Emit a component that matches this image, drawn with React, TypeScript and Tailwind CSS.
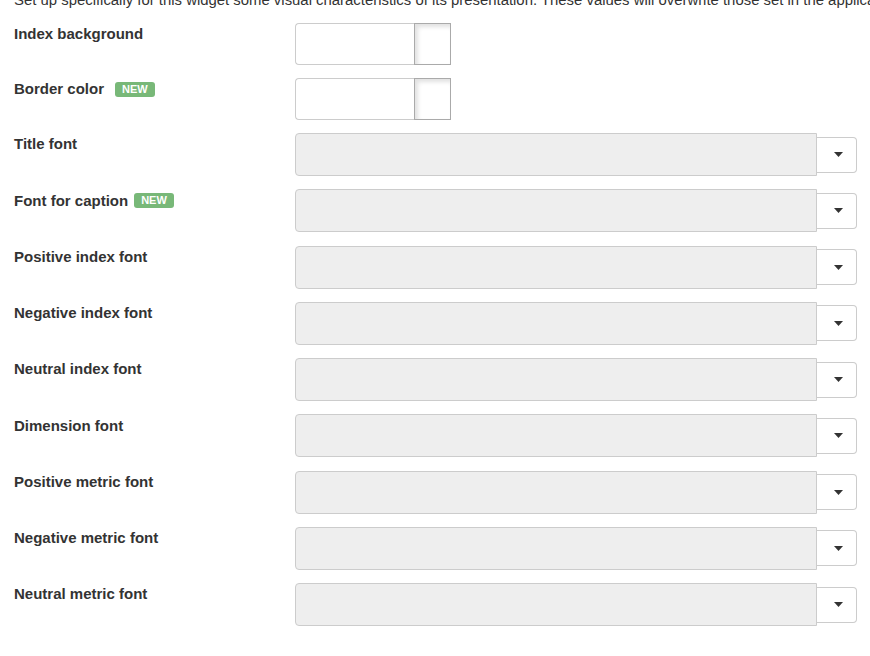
import React from 'react';

type Field = { label: string; isNew: boolean; badgeGap?: string };

const colorFields: Field[] = [
  { label: 'Index background', isNew: false },
  { label: 'Border color', isNew: true, badgeGap: 'ml-[11px]' },
];

const fontFields: Field[] = [
  { label: 'Title font', isNew: false },
  { label: 'Font for caption', isNew: true, badgeGap: 'ml-[6px]' },
  { label: 'Positive index font', isNew: false },
  { label: 'Negative index font', isNew: false },
  { label: 'Neutral index font', isNew: false },
  { label: 'Dimension font', isNew: false },
  { label: 'Positive metric font', isNew: false },
  { label: 'Negative metric font', isNew: false },
  { label: 'Neutral metric font', isNew: false },
];

const NewBadge = ({ gap }: { gap?: string }) => (
  <span
    className={`${gap ?? 'ml-[8px]'} inline-flex h-[15px] items-center rounded-[3px] bg-[#78b878] px-[7px] text-[11px] font-bold leading-none text-white`}
  >
    NEW
  </span>
);

const FieldLabel = ({ label, isNew, badgeGap }: Field) => (
  <div className="flex h-[22px] w-[281px] shrink-0 items-center pt-px text-[15px] font-bold text-[#333]">
    <span>{label}</span>
    {isNew && <NewBadge gap={badgeGap} />}
  </div>
);

const ColorField = (props: Field) => (
  <div className="flex h-[55px] items-start">
    <FieldLabel {...props} />
    <div className="flex h-[42px]">
      <input
        type="text"
        className="h-full w-[119px] rounded-l-[4px] border border-r-0 border-[#ccc] bg-white outline-none"
      />
      <div className="h-full w-[37px] border border-[#aaa] bg-white shadow-[inset_3px_3px_4px_rgba(0,0,0,0.12)]" />
    </div>
  </div>
);

const FontSelect = (props: Field) => (
  <div className="flex h-[56.25px] items-start">
    <FieldLabel {...props} />
    <div className="flex h-[43px] items-center">
      <div className="h-full w-[522px] rounded-l-[4px] border border-[#ccc] bg-[#eee]" />
      <button className="flex h-[36px] w-[40px] items-center justify-center rounded-r-[4px] border border-l-0 border-[#ccc] bg-white">
        <svg width="9" height="5" viewBox="0 0 9 5" className="ml-[3px]">
          <path d="M0 0h9L4.5 5z" fill="#333" />
        </svg>
      </button>
    </div>
  </div>
);

export default function App() {
  return (
    <div className="h-[656px] w-[870px] overflow-hidden bg-white font-['Liberation_Sans',Arial,sans-serif] text-[#333]">
      <div className="px-[14px]">
        <p className="-mt-[10px] whitespace-nowrap text-[14.9px] leading-[20px]">
          Set up specifically for this widget some visual characteristics of its presentation. These values will overwrite those set in the application.
        </p>
        <div className="mt-[13px]">
          {colorFields.map((f) => (
            <ColorField key={f.label} {...f} />
          ))}
          {fontFields.map((f) => (
            <FontSelect key={f.label} {...f} />
          ))}
        </div>
      </div>
    </div>
  );
}
